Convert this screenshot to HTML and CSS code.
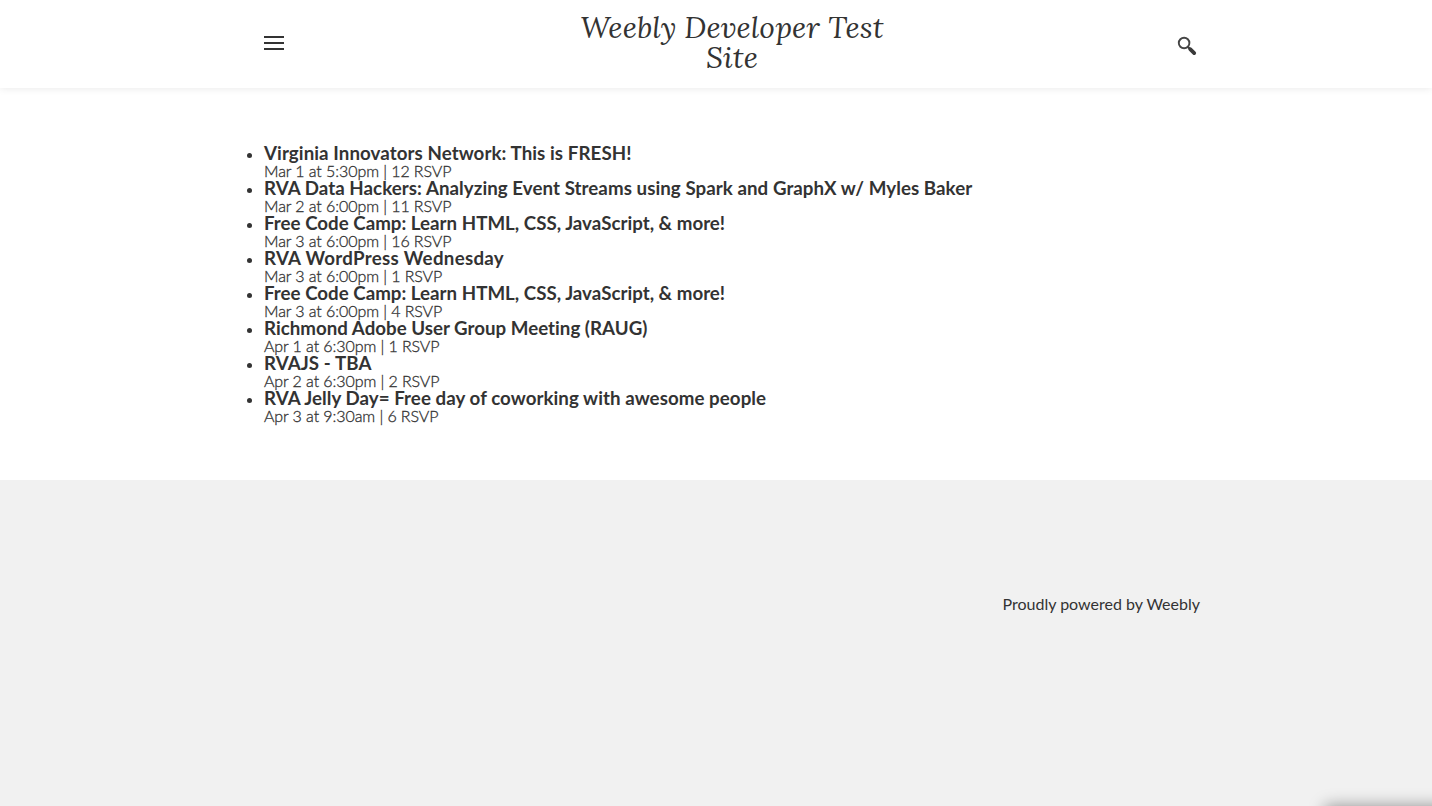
FILE: index.html
```html
<!DOCTYPE html>
<html lang="en">
<head>
<meta charset="utf-8">
<title>Weebly Developer Test Site</title>
<link rel="stylesheet" href="styles.css">
</head>
<body>
<header class="site-header">
  <div class="header-inner">
    <button class="menu-button" aria-label="Menu"><span></span><span></span><span></span></button>
    <h1 class="site-title">Weebly Developer Test<br>Site</h1>
    <button class="search-button" aria-label="Search">
      <svg width="20" height="20" viewBox="0 0 20 20"><circle cx="7.1" cy="7" r="5.3" fill="#fff" stroke="#454545" stroke-width="1.9"/><path d="M10.8 10.8l2 2" stroke="#454545" stroke-width="2.2"/><path d="M13.2 13.2l4 3.9" stroke="#3a3a3a" stroke-width="3.8" stroke-linecap="round"/></svg>
    </button>
  </div>
</header>
<main class="content">
  <ul class="events">
    <li><h3 class="roomy">Virginia Innovators Network: This is FRESH!</h3><p>Mar 1 at 5:30pm | 12 RSVP</p></li>
    <li><h3>RVA Data Hackers: Analyzing Event Streams using Spark and GraphX w/ Myles Baker</h3><p>Mar 2 at 6:00pm | 11 RSVP</p></li>
    <li><h3 class="snug">Free Code Camp: Learn HTML, CSS, JavaScript, &amp; more!</h3><p>Mar 3 at 6:00pm | 16 RSVP</p></li>
    <li><h3 class="wide">RVA WordPress Wednesday</h3><p>Mar 3 at 6:00pm | 1 RSVP</p></li>
    <li><h3 class="snug">Free Code Camp: Learn HTML, CSS, JavaScript, &amp; more!</h3><p>Mar 3 at 6:00pm | 4 RSVP</p></li>
    <li><h3 class="snug">Richmond Adobe User Group Meeting (RAUG)</h3><p>Apr 1 at 6:30pm | 1 RSVP</p></li>
    <li><h3 class="roomy">RVAJS - TBA</h3><p>Apr 2 at 6:30pm | 2 RSVP</p></li>
    <li><h3>RVA Jelly Day= Free day of coworking with awesome people</h3><p>Apr 3 at 9:30am | 6 RSVP</p></li>
  </ul>
</main>
<footer class="site-footer">
  <p class="credit">Proudly powered by Weebly</p>
</footer>
<div class="corner"><div class="corner-panel"></div></div>
</body>
</html>
```
FILE: styles.css
```css
* { box-sizing: border-box; margin: 0; padding: 0; }
body {
  height: 806px;
  overflow: hidden;
  display: flex;
  flex-direction: column;
  background: #fff;
  color: #333;
  font: 16px/16px Lato, sans-serif;
}
button { border: 0; background: none; }
.site-header { height: 88px; box-shadow: 0 0 8px rgba(0, 0, 0, .1); }
.header-inner {
  width: 936px;
  height: 88px;
  margin-left: 264px;
  display: grid;
  grid-template-columns: 312px 312px 312px;
}
.menu-button {
  width: 20px;
  height: 14px;
  margin-top: 36px;
  display: flex;
  flex-direction: column;
  justify-content: space-between;
}
.menu-button span { width: 20px; height: 2px; background: #333; }
.site-title {
  padding-top: 12px;
  text-align: center;
  font: italic 400 30px/30px Lora, "Liberation Serif", serif;
  white-space: nowrap;
}
.search-button { justify-self: end; width: 20px; height: 20px; margin: 36px 3px 0 0; }
.search-button svg { display: block; }
.content { height: 392px; padding: 56px 0 0 264px; }
.events li { height: 35px; }
.events h3 { font-size: 18.72px; line-height: 19px; font-weight: 700; letter-spacing: .06px; }
.events .snug { letter-spacing: .015px; }
.events .roomy { letter-spacing: .08px; }
.events .wide { letter-spacing: .29px; }
.events p { font-weight: 300; letter-spacing: -.08px; -webkit-text-stroke: .3px #333; }
.site-footer { flex: 1; background: #f1f1f1; padding-top: 116px; }
.credit { width: 936px; margin-left: 264px; text-align: right; }
/* Clips the off-screen panel so only its shadow shows */
.corner {
  position: absolute;
  right: 0;
  bottom: 0;
  width: 132px;
  height: 26px;
  overflow: hidden;
}
.corner-panel {
  width: 140px;
  height: 60px;
  margin: 26px 0 0 25px;
  box-shadow: 0 0 15px rgba(0, 0, 0, .4);
}
```
